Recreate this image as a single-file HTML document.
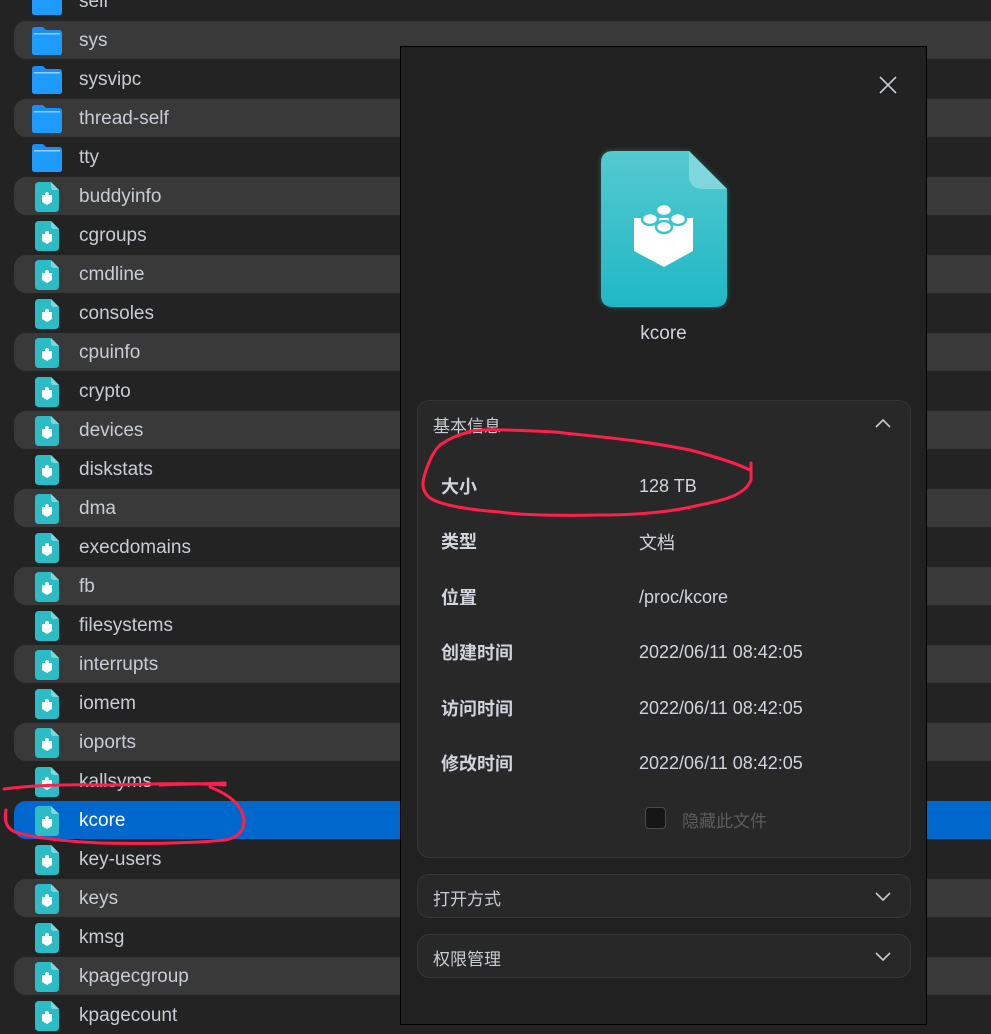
<!DOCTYPE html>
<html><head><meta charset="utf-8"><style>
*{margin:0;padding:0;box-sizing:border-box}
body{width:991px;height:1030px;overflow:hidden;background:#232323;font-family:"Liberation Sans","Noto Sans CJK SC",sans-serif;position:relative;color:#c8ccd4}
.row{position:absolute;left:14px;right:0;height:38px}
.row.s{background:#393939;border-radius:12px 0 0 12px}
.row.sel{background:#0068cc;border-radius:12px 0 0 12px}
.row .t{position:absolute;left:65px;top:9px;font-size:19px;color:#c8ccd4}
.row.sel .t{color:#fff}
.row svg{position:absolute}
.panel{position:absolute;left:400px;top:46px;width:527px;height:979px;background:#212121;border:1px solid #000}
.box{position:absolute;left:16px;width:494px;background:#282828;border:1px solid #353535;border-radius:12px}
.lab{position:absolute;left:23px;font-size:18px;font-weight:bold;color:#d0d4dc}
.val{position:absolute;left:221px;font-size:18px;color:#d0d4dc}
.hd{position:absolute;left:15px;font-size:17px;color:#c8ccd4}
</style></head><body>
<svg width="0" height="0" style="position:absolute">
<defs>
<symbol id="fi" viewBox="0 0 24 30">
<path d="M4 0H16L24 8V26Q24 30 20 30H4Q0 30 0 26V4Q0 0 4 0Z" fill="#2bbcc6"/>
<path d="M16 0L24 8H19Q16 8 16 5Z" fill="#7dd8de"/>
<path d="M7 13H17V20L12 23L7 20Z" fill="#fff"/>
<circle cx="12" cy="12" r="2" fill="#fff"/>
</symbol>
<symbol id="fo" viewBox="0 0 30 28">
<path d="M3 0H11L14 3H27Q30 3 30 6V25Q30 28 27 28H3Q0 28 0 25V3Q0 0 3 0Z" fill="#1a8ef5"/>
<path d="M0 6H30V25Q30 28 27 28H3Q0 28 0 25Z" fill="#1e9bff"/>
<rect x="2" y="6" width="26" height="1.5" fill="#8fd0ff"/>
</symbol>
</defs></svg>

<div class="row" style="top:-18px"><svg style="left:18px;top:5px" width="30" height="28"><use href="#fo"/></svg><span class="t">self</span></div>
<div class="row s" style="top:21px"><svg style="left:18px;top:6px" width="30" height="28"><use href="#fo"/></svg><span class="t">sys</span></div>
<div class="row" style="top:60px"><svg style="left:18px;top:6px" width="30" height="28"><use href="#fo"/></svg><span class="t">sysvipc</span></div>
<div class="row s" style="top:99px"><svg style="left:18px;top:6px" width="30" height="28"><use href="#fo"/></svg><span class="t">thread-self</span></div>
<div class="row" style="top:138px"><svg style="left:18px;top:6px" width="30" height="28"><use href="#fo"/></svg><span class="t">tty</span></div>
<div class="row s" style="top:177px"><svg style="left:21px;top:5px" width="24" height="30"><use href="#fi"/></svg><span class="t">buddyinfo</span></div>
<div class="row" style="top:216px"><svg style="left:21px;top:5px" width="24" height="30"><use href="#fi"/></svg><span class="t">cgroups</span></div>
<div class="row s" style="top:255px"><svg style="left:21px;top:5px" width="24" height="30"><use href="#fi"/></svg><span class="t">cmdline</span></div>
<div class="row" style="top:294px"><svg style="left:21px;top:5px" width="24" height="30"><use href="#fi"/></svg><span class="t">consoles</span></div>
<div class="row s" style="top:333px"><svg style="left:21px;top:5px" width="24" height="30"><use href="#fi"/></svg><span class="t">cpuinfo</span></div>
<div class="row" style="top:372px"><svg style="left:21px;top:5px" width="24" height="30"><use href="#fi"/></svg><span class="t">crypto</span></div>
<div class="row s" style="top:411px"><svg style="left:21px;top:5px" width="24" height="30"><use href="#fi"/></svg><span class="t">devices</span></div>
<div class="row" style="top:450px"><svg style="left:21px;top:5px" width="24" height="30"><use href="#fi"/></svg><span class="t">diskstats</span></div>
<div class="row s" style="top:489px"><svg style="left:21px;top:5px" width="24" height="30"><use href="#fi"/></svg><span class="t">dma</span></div>
<div class="row" style="top:528px"><svg style="left:21px;top:5px" width="24" height="30"><use href="#fi"/></svg><span class="t">execdomains</span></div>
<div class="row s" style="top:567px"><svg style="left:21px;top:5px" width="24" height="30"><use href="#fi"/></svg><span class="t">fb</span></div>
<div class="row" style="top:606px"><svg style="left:21px;top:5px" width="24" height="30"><use href="#fi"/></svg><span class="t">filesystems</span></div>
<div class="row s" style="top:645px"><svg style="left:21px;top:5px" width="24" height="30"><use href="#fi"/></svg><span class="t">interrupts</span></div>
<div class="row" style="top:684px"><svg style="left:21px;top:5px" width="24" height="30"><use href="#fi"/></svg><span class="t">iomem</span></div>
<div class="row s" style="top:723px"><svg style="left:21px;top:5px" width="24" height="30"><use href="#fi"/></svg><span class="t">ioports</span></div>
<div class="row" style="top:762px"><svg style="left:21px;top:5px" width="24" height="30"><use href="#fi"/></svg><span class="t">kallsyms</span></div>
<div class="row sel" style="top:801px"><svg style="left:21px;top:5px" width="24" height="30"><use href="#fi"/></svg><span class="t">kcore</span></div>
<div class="row" style="top:840px"><svg style="left:21px;top:5px" width="24" height="30"><use href="#fi"/></svg><span class="t">key-users</span></div>
<div class="row s" style="top:879px"><svg style="left:21px;top:5px" width="24" height="30"><use href="#fi"/></svg><span class="t">keys</span></div>
<div class="row" style="top:918px"><svg style="left:21px;top:5px" width="24" height="30"><use href="#fi"/></svg><span class="t">kmsg</span></div>
<div class="row s" style="top:957px"><svg style="left:21px;top:5px" width="24" height="30"><use href="#fi"/></svg><span class="t">kpagecgroup</span></div>
<div class="row" style="top:996px"><svg style="left:21px;top:5px" width="24" height="30"><use href="#fi"/></svg><span class="t">kpagecount</span></div>

<div class="panel">
<svg style="position:absolute;left:478px;top:29px" width="18" height="18"><path d="M1 1L17 17M17 1L1 17" stroke="#c8ccd4" stroke-width="1.6"/></svg>
<svg style="position:absolute;left:192px;top:96px" width="144" height="176" viewBox="-8 -8 144 176">
<defs><linearGradient id="g" x1="0" y1="0" x2="0" y2="1"><stop offset="0" stop-color="#55c9cf"/><stop offset="1" stop-color="#1fb8c6"/></linearGradient>
<filter id="gl"><feGaussianBlur stdDeviation="3"/></filter></defs>
<path d="M12 0H88L126 38V144Q126 156 114 156H12Q0 156 0 144V12Q0 0 12 0Z" fill="#3fc9d2" opacity=".35" filter="url(#gl)"/>
<path d="M12 0H88L126 38V144Q126 156 114 156H12Q0 156 0 144V12Q0 0 12 0Z" fill="url(#g)"/>
<path d="M88 0L126 38H102Q88 38 88 24Z" fill="#7fd6dc"/>
<path d="M33 67H92V100L63 116L33 100Z" fill="#fff"/>
<g fill="#fff" stroke="#3cc3cc" stroke-width="2.5"><ellipse cx="63" cy="59" rx="8" ry="6"/><ellipse cx="49" cy="68" rx="8" ry="6"/><ellipse cx="77" cy="68" rx="8" ry="6"/><ellipse cx="63" cy="76" rx="8" ry="6"/></g>
</svg>
<div style="position:absolute;left:0;width:525px;top:276px;text-align:center;font-size:19px;color:#d0d4dc">kcore</div>

<div class="box" style="top:353px;height:458px">
<span class="hd" style="top:11px">基本信息</span>
<svg style="position:absolute;left:457px;top:17px" width="16" height="10"><path d="M1 9L8 2L15 9" stroke="#c8ccd4" stroke-width="1.6" fill="none"/></svg>
<span class="lab" style="top:72px">大小</span><span class="val" style="top:75px">128 TB</span>
<span class="lab" style="top:127px">类型</span><span class="val" style="top:128px">文档</span>
<span class="lab" style="top:183px">位置</span><span class="val" style="top:186px">/proc/kcore</span>
<span class="lab" style="top:238px">创建时间</span><span class="val" style="top:241px">2022/06/11 08:42:05</span>
<span class="lab" style="top:294px">访问时间</span><span class="val" style="top:297px">2022/06/11 08:42:05</span>
<span class="lab" style="top:349px">修改时间</span><span class="val" style="top:352px">2022/06/11 08:42:05</span>
<div style="position:absolute;left:227px;top:406px;width:21px;height:22px;border:1.5px solid #4a4a4a;border-radius:4px;background:#161616"></div>
<span style="position:absolute;left:264px;top:406px;font-size:17px;color:#5c5c5c">隐藏此文件</span>
</div>
<div class="box" style="top:827px;height:44px">
<span class="hd" style="top:10px">打开方式</span>
<svg style="position:absolute;left:457px;top:17px" width="16" height="10"><path d="M1 1L8 8L15 1" stroke="#c8ccd4" stroke-width="1.6" fill="none"/></svg>
</div>
<div class="box" style="top:887px;height:44px">
<span class="hd" style="top:10px">权限管理</span>
<svg style="position:absolute;left:457px;top:17px" width="16" height="10"><path d="M1 1L8 8L15 1" stroke="#c8ccd4" stroke-width="1.6" fill="none"/></svg>
</div>
</div>

<svg style="position:absolute;left:0;top:0" width="991" height="1030">
<g stroke="#ff1f4a" stroke-width="3" fill="none" stroke-linecap="round">
<path d="M467 432C480 428 510 430 555 432C600 437 640 440 690 450C720 458 740 465 750 470M751 463V480C745 495 725 500 700 505C680 510 650 515 600 515C560 516 520 515 500 512C470 510 440 505 430 498C420 490 422 480 428 465C432 455 435 450 440 445C450 438 460 434 470 432"/>
<path d="M4 789C20 787 50 784 100 785C140 785 180 782 225 785M160 785C180 784 200 784 225 783M210 787C230 795 242 805 244 820C244 830 240 837 225 840C195 843 150 844 100 843C60 841 30 837 15 832C6 828 4 820 6 810"/>
</g></svg>
</body></html>
